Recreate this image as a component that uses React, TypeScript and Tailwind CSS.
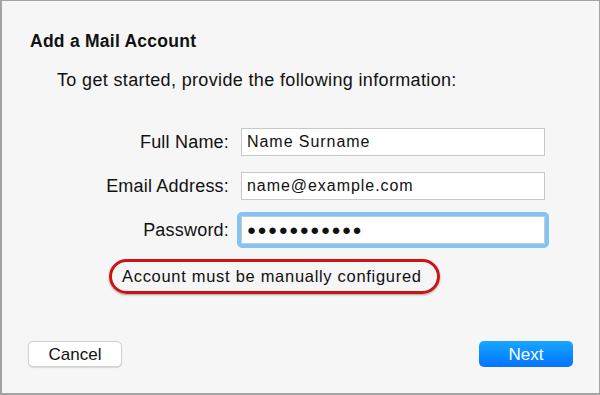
export default function App() {
  const font = { fontFamily: '"Liberation Sans", Arial, sans-serif' };
  return (
    <div
      style={font}
      className="w-[600px] h-[395px] bg-[#f6f6f6] border-2 border-[#a3a3a3] border-t border-r flex flex-col text-[#111]"
    >
      <h1 className="ml-[28px] mt-[29px] text-[17.5px] font-bold leading-[22px] tracking-[0.25px]">
        Add a Mail Account
      </h1>
      <p className="ml-[55px] mt-[17px] text-[18px] leading-[22px] tracking-[0.35px]">
        To get started, provide the following information:
      </p>

      <div className="mt-[37px] grid grid-cols-[227px_304px] gap-x-[12px] gap-y-[16px] items-center">
        <label className="text-right text-[18px] tracking-[0.2px]">Full Name:</label>
        <div className="h-[28px] bg-white border border-[#c8c8c8] px-[5px] flex items-center text-[16px] tracking-[0.95px]">
          Name Surname
        </div>
        <label className="text-right text-[18px] tracking-[0.2px]">Email Address:</label>
        <div className="h-[28px] bg-white border border-[#c8c8c8] px-[5px] flex items-center text-[16px] tracking-[0.95px]">
          name@example.com
        </div>
        <label className="text-right text-[18px] tracking-[0.2px]">Password:</label>
        <div className="h-[28px] bg-white border border-[#c8c8c8] px-[5px] flex items-center outline-[4px] outline-[#82c5f5] rounded-[1px]">
          <span className="tracking-[1.5px] text-[15px]">●●●●●●●●●●●</span>
        </div>
      </div>

      <div className="ml-[107px] mt-[15px] w-[331px] h-[35px] rounded-full border-[3px] border-[#cc1416] shadow-[0_1px_2px_rgba(0,0,0,0.35)] flex items-center pl-[10px] text-[16.5px] tracking-[0.7px]">
        Account must be manually configured
      </div>

      <div className="mt-auto mb-[26px] flex justify-between px-[26px]">
        <button className="w-[94px] h-[26px] rounded-[5px] bg-white border border-[#d0d0d0] shadow-[0_1px_1px_rgba(0,0,0,0.12)] text-[17px] leading-none">
          Cancel
        </button>
        <button className="w-[94px] h-[26px] rounded-[5px] bg-gradient-to-b from-[#1aa6ff] to-[#0a72ff] text-white text-[17px] leading-none">
          Next
        </button>
      </div>
    </div>
  );
}
